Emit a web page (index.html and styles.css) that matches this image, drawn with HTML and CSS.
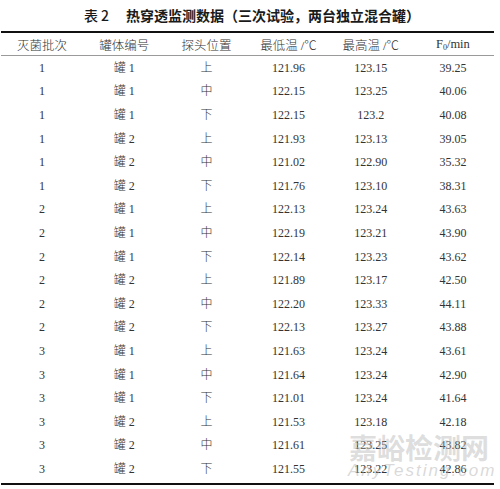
FILE: index.html
```html
<!DOCTYPE html>
<html lang="zh">
<head>
<meta charset="utf-8">
<link rel="stylesheet" href="styles.css">
</head>
<body>
<div class="page">
  <h1 class="title"><span class="tno">表 2</span>热穿透监测数据（三次试验，两台独立混合罐）</h1>
  <table class="data">
    <thead>
      <tr><th>灭菌批次</th><th>罐体编号</th><th>探头位置</th><th>最低温 /℃</th><th>最高温 /℃</th><th>F<sub>0</sub>/min</th></tr>
    </thead>
    <tbody>
      <tr><td>1</td><td>罐 1</td><td>上</td><td>121.96</td><td>123.15</td><td>39.25</td></tr>
      <tr><td>1</td><td>罐 1</td><td>中</td><td>122.15</td><td>123.25</td><td>40.06</td></tr>
      <tr><td>1</td><td>罐 1</td><td>下</td><td>122.15</td><td>123.2</td><td>40.08</td></tr>
      <tr><td>1</td><td>罐 2</td><td>上</td><td>121.93</td><td>123.13</td><td>39.05</td></tr>
      <tr><td>1</td><td>罐 2</td><td>中</td><td>121.02</td><td>122.90</td><td>35.32</td></tr>
      <tr><td>1</td><td>罐 2</td><td>下</td><td>121.76</td><td>123.10</td><td>38.31</td></tr>
      <tr><td>2</td><td>罐 1</td><td>上</td><td>122.13</td><td>123.24</td><td>43.63</td></tr>
      <tr><td>2</td><td>罐 1</td><td>中</td><td>122.19</td><td>123.21</td><td>43.90</td></tr>
      <tr><td>2</td><td>罐 1</td><td>下</td><td>122.14</td><td>123.23</td><td>43.62</td></tr>
      <tr><td>2</td><td>罐 2</td><td>上</td><td>121.89</td><td>123.17</td><td>42.50</td></tr>
      <tr><td>2</td><td>罐 2</td><td>中</td><td>122.20</td><td>123.33</td><td>44.11</td></tr>
      <tr><td>2</td><td>罐 2</td><td>下</td><td>122.13</td><td>123.27</td><td>43.88</td></tr>
      <tr><td>3</td><td>罐 1</td><td>上</td><td>121.63</td><td>123.24</td><td>43.61</td></tr>
      <tr><td>3</td><td>罐 1</td><td>中</td><td>121.64</td><td>123.24</td><td>42.90</td></tr>
      <tr><td>3</td><td>罐 1</td><td>下</td><td>121.01</td><td>123.24</td><td>41.64</td></tr>
      <tr><td>3</td><td>罐 2</td><td>上</td><td>121.53</td><td>123.18</td><td>42.18</td></tr>
      <tr><td>3</td><td>罐 2</td><td>中</td><td>121.61</td><td>123.25</td><td>43.82</td></tr>
      <tr class="last"><td>3</td><td>罐 2</td><td>下</td><td>121.55</td><td>123.22</td><td>42.86</td></tr>
    </tbody>
  </table>
  <div class="watermark">
    <div class="wm-cn">嘉峪检测网</div>
    <div class="wm-en">AnyTesting.com</div>
  </div>
</div>
</body>
</html>
```

FILE: styles.css
```css
html, body {
  margin: 0;
  padding: 0;
  background: #ffffff;
}
.page {
  position: relative;
  width: 500px;
  height: 489px;
  overflow: hidden;
  font-family: "Liberation Serif", "Noto Sans CJK SC", serif;
  color: #333333;
}
.title {
  margin: 0;
  height: 31px;
  line-height: 31px;
  text-align: center;
  font-family: "Noto Sans CJK SC", sans-serif;
  font-weight: 700;
  font-size: 14px;
  color: #1a1a1a;
  padding-left: 4px;
  letter-spacing: 0;
}
.tno {
  margin-right: 17px;
  font-weight: 500;
}
.data {
  margin-left: 1px;
  width: 493px;
  border-collapse: collapse;
  table-layout: fixed;
  border-top: 2px solid #111111;
  border-bottom: 2px solid #111111;
}
.data th {
  height: 22px;
  padding: 0;
  font-weight: 300;
  font-size: 12.5px;
  font-family: "Liberation Serif", "Noto Sans CJK SC", serif;
  color: #333333;
  border-bottom: 1px solid #9a9a9a;
  text-align: center;
  vertical-align: middle;
}
.data th sub {
  font-size: 8px;
  vertical-align: -2px;
  line-height: 0;
}
.data td {
  height: 23.6px;
  padding: 0;
  font-size: 12px;
  font-weight: 300;
  text-align: center;
  vertical-align: middle;
  line-height: 14px;
}
.data tr.last td {
  height: 23px;
  padding-bottom: 3px;
}
.watermark {
  position: absolute;
  left: 348px;
  top: 431px;
  width: 142px;
  text-align: center;
  pointer-events: none;
}
.wm-cn {
  font-family: "Noto Sans CJK SC", sans-serif;
  font-weight: 700;
  font-size: 28px;
  line-height: 32px;
  color: rgba(180, 180, 180, 0.45);
}
.wm-en {
  font-family: "Liberation Sans", sans-serif;
  font-style: italic;
  font-size: 17px;
  line-height: 16px;
  color: rgba(180, 180, 180, 0.5);
  letter-spacing: 2px;
}
```
